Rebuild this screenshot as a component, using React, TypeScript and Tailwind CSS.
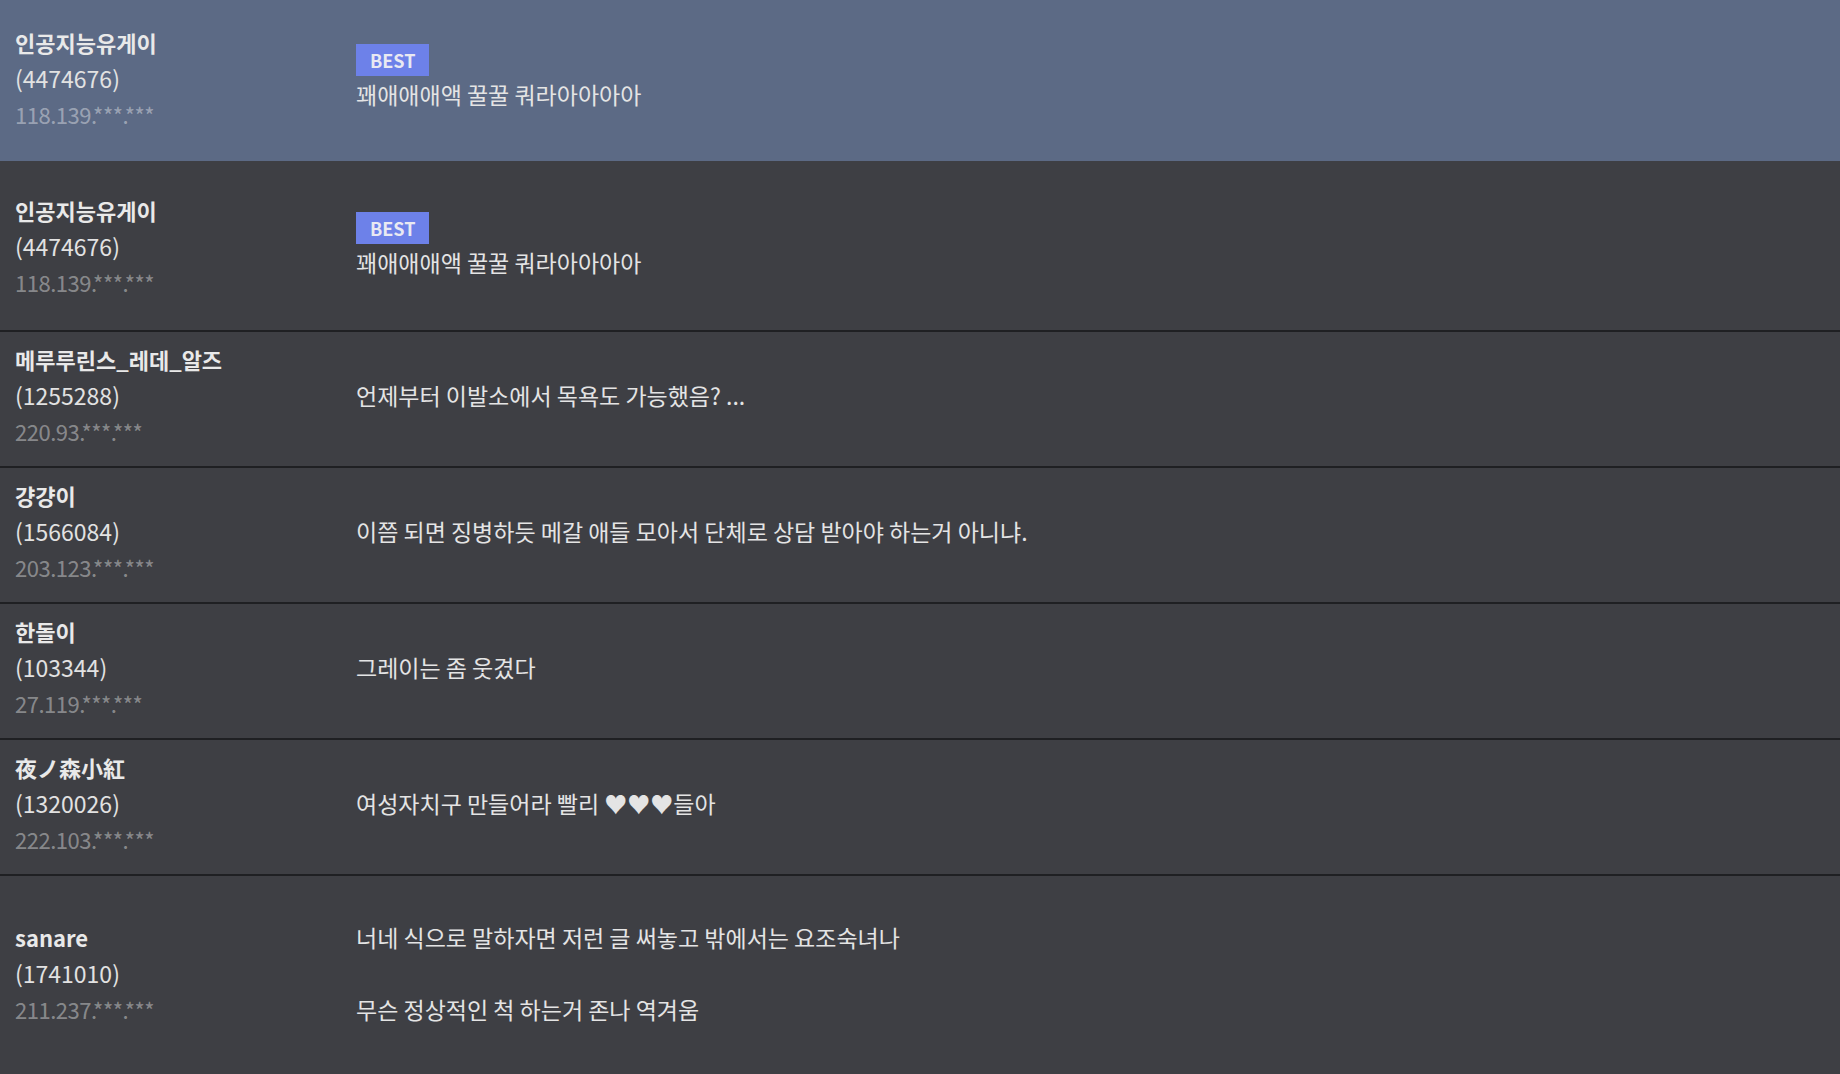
import React from 'react';

type Comment = {
  name: string;
  uid: string;
  ip: string;
  lines: string[];
  best?: boolean;
  active?: boolean;
  rowClass: string;
};

const comments: Comment[] = [
  { name: '인공지능유게이', uid: '4474676', ip: '118.139.***.***', lines: ['꽤애애애액 꿀꿀 쿼라아아아아'], best: true, active: true, rowClass: 'h-[161px] pb-[6px]' },
  { name: '인공지능유게이', uid: '4474676', ip: '118.139.***.***', lines: ['꽤애애애액 꿀꿀 쿼라아아아아'], best: true, rowClass: 'h-[171px]' },
  { name: '메루루린스_레데_알즈', uid: '1255288', ip: '220.93.***.***', lines: ['언제부터 이발소에서 목욕도 가능했음? ...'], rowClass: 'h-[136px] pb-[9px]' },
  { name: '걍걍이', uid: '1566084', ip: '203.123.***.***', lines: ['이쯤 되면 징병하듯 메갈 애들 모아서 단체로 상담 받아야 하는거 아니냐.'], rowClass: 'h-[136px] pb-[9px]' },
  { name: '한돌이', uid: '103344', ip: '27.119.***.***', lines: ['그레이는 좀 웃겼다'], rowClass: 'h-[136px] pb-[9px]' },
  { name: '夜ノ森小紅', uid: '1320026', ip: '222.103.***.***', lines: ['여성자치구 만들어라 빨리 ♥♥♥들아'], rowClass: 'h-[136px] pb-[9px]' },
  { name: 'sanare', uid: '1741010', ip: '211.237.***.***', lines: ['너네 식으로 말하자면 저런 글 써놓고 밖에서는 요조숙녀나', '', '무슨 정상적인 척 하는거 존나 역겨움'], rowClass: 'h-[202px] pb-[6px]' },
];

function CommentRow({ c }: { c: Comment }) {
  return (
    <div
      className={`grid grid-cols-[356px_1fr] items-center ${c.rowClass} ${
        c.active ? 'bg-[#5c6a85]' : 'border-b-2 border-[#1f2023] bg-[#3e3f44]'
      }`}
    >
      <div className="flex flex-col pl-[15px] leading-[36px]">
        <span className="text-[22px] font-bold text-[#e9e9e9]">{c.name}</span>
        <span className="text-[#e2e2e2]">({c.uid})</span>
        <span className="text-[22px] tracking-[-0.5px] text-white/40">{c.ip}</span>
      </div>
      <div className="flex flex-col items-start leading-[36px] text-[#e4e4e4]">
        {c.best && (
          <span className="h-[32px] bg-[#6d81e9] px-[14px] text-[18px] font-bold leading-[32px] text-[#e9e9f2]">BEST</span>
        )}
        {c.lines.map((line, i) => (
          <p key={i} className="h-[36px]">{line}</p>
        ))}
      </div>
    </div>
  );
}

export default function App() {
  return (
    <div className="h-[1074px] w-full overflow-hidden bg-[#3e3f44] text-[23px] font-['Noto_Sans_CJK_KR','Noto_Sans_CJK_JP',sans-serif]">
      {comments.map((c, i) => (
        <CommentRow key={i} c={c} />
      ))}
    </div>
  );
}
